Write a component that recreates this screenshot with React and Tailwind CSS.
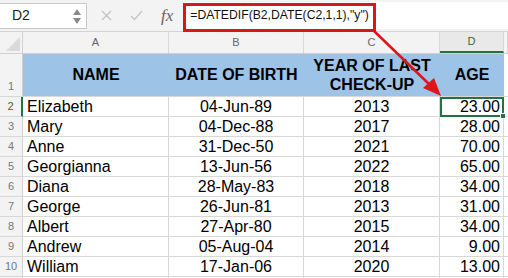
import React from 'react';

const rows = [
  ['Elizabeth', '04-Jun-89', '2013', '23.00'],
  ['Mary', '04-Dec-88', '2017', '28.00'],
  ['Anne', '31-Dec-50', '2021', '70.00'],
  ['Georgianna', '13-Jun-56', '2022', '65.00'],
  ['Diana', '28-May-83', '2018', '34.00'],
  ['George', '26-Jun-81', '2013', '31.00'],
  ['Albert', '27-Apr-80', '2015', '34.00'],
  ['Andrew', '05-Aug-04', '2014', '9.00'],
  ['William', '17-Jan-06', '2020', '13.00'],
];

const cols = 'grid grid-cols-[23px_146px_135px_136px_64px_4px]';

function FormulaBar() {
  return (
    <div className="flex items-center h-[32px] bg-[#f3f3f3] border-b border-[#d4d4d4]">
      <div className="relative w-[88px] h-[26px] bg-white border border-[#c8c8c8] -ml-px flex items-center">
        <span className="ml-[12px] text-[14px] text-[#222]">D2</span>
        <div className="absolute left-[73px] top-[5px] flex flex-col gap-[3px]">
          <svg width="8" height="6" viewBox="0 0 8 6">
            <polygon points="4,0 8,6 0,6" fill="#8a8a8a" />
          </svg>
          <svg width="8" height="6" viewBox="0 0 8 6">
            <polygon points="0,0 8,0 4,6" fill="#8a8a8a" />
          </svg>
        </div>
      </div>
      <div className="flex items-center ml-[14px] gap-[18px]">
        <svg width="11" height="11" viewBox="0 0 11 11">
          <path d="M1 1L10 10M10 1L1 10" stroke="#c4c4c4" strokeWidth="1.4" />
        </svg>
        <svg width="13" height="11" viewBox="0 0 13 11">
          <path d="M1 6L4.5 9.5L12 1" stroke="#c4c4c4" strokeWidth="1.4" fill="none" />
        </svg>
        <span className="font-['Liberation_Serif'] italic text-[17px] text-[#666] leading-none">fx</span>
      </div>
      <div className="ml-[11px] flex-1 h-[27px] bg-white flex items-center">
        <span className="ml-[6px] text-[12.2px] text-[#111]">=DATEDIF(B2,DATE(C2,1,1),"y")</span>
      </div>
    </div>
  );
}

function ColHeader() {
  const letters = ['A', 'B', 'C', 'D', ''];
  return (
    <div className={`${cols} h-[22px] bg-[#f3f3f3] border-b border-[#d0d0d0]`}>
      <div className="relative border-r border-[#d0d0d0]">
        <svg className="absolute right-[2px] bottom-[2px]" width="14" height="14" viewBox="0 0 14 14">
          <polygon points="14,0 14,14 0,14" fill="#d9d9d9" />
        </svg>
      </div>
      {letters.map((l, i) => (
        <div
          key={i}
          className={`flex items-center justify-center text-[11px] border-r border-[#d8d8d8] ${
            l === 'D' ? 'text-[#217346] border-b-2 border-b-[#217346] bg-[#e9e9e9]' : 'text-[#666]'
          }`}
        >
          {l}
        </div>
      ))}
    </div>
  );
}

function RowNum({ n, active, bottom }) {
  return (
    <div
      className={`flex justify-center text-[11px] bg-[#f3f3f3] border-b border-[#d8d8d8] ${
        bottom ? 'items-end pb-[2px]' : 'items-center'
      } ${active ? 'text-[#217346] border-r-2 border-r-[#217346]' : 'text-[#777] border-r border-r-[#d0d0d0]'}`}
    >
      {n}
    </div>
  );
}

export default function App() {
  return (
    <div className="relative w-[508px] h-[278px] overflow-hidden bg-white font-['Liberation_Sans',Arial,sans-serif] text-black">
      <FormulaBar />
      <ColHeader />
      <div className={`${cols} h-[43px]`}>
        <RowNum n="1" bottom />
        <div className="bg-[#9dc3e6] flex items-center justify-center font-bold text-[16px] border-b border-[#d8d8d8]">NAME</div>
        <div className="bg-[#9dc3e6] flex items-center justify-center font-bold text-[16px] border-b border-[#d8d8d8]">DATE OF BIRTH</div>
        <div className="bg-[#9dc3e6] flex flex-col items-center justify-center font-bold text-[16px] leading-[19px] border-b border-[#d8d8d8]">
          <span>YEAR OF LAST</span>
          <span>CHECK-UP</span>
        </div>
        <div className="bg-[#9dc3e6] flex items-center justify-center font-bold text-[16px] border-b border-[#d8d8d8]">AGE</div>
        <div className="border-b border-[#d8d8d8]"></div>
      </div>
      {rows.map((r, i) => (
        <div key={i} className={`${cols} h-[20px] text-[16px] leading-none`}>
          <RowNum n={i + 2} active={i === 0} />
          <div className="flex items-center pl-[4px] border-r border-b border-[#d8d8d8]">{r[0]}</div>
          <div className="flex items-center justify-center border-r border-b border-[#d8d8d8]">{r[1]}</div>
          <div className="flex items-center justify-center border-r border-b border-[#d8d8d8]">{r[2]}</div>
          {i === 0 ? (
            <div className="relative flex items-center justify-end pr-[2px] border-2 border-[#217346]">
              {r[3]}
              <div className="absolute -right-[4px] -bottom-[4px] w-[6px] h-[6px] bg-[#217346] border border-white"></div>
            </div>
          ) : (
            <div className="flex items-center justify-end pr-[3px] border-r border-b border-[#d8d8d8]">{r[3]}</div>
          )}
          <div className="border-b border-[#d8d8d8]"></div>
        </div>
      ))}
      <div className={`${cols} h-[10px]`}>
        <RowNum n="" />
        <div className="border-r border-[#d8d8d8]"></div>
        <div className="border-r border-[#d8d8d8]"></div>
        <div className="border-r border-[#d8d8d8]"></div>
        <div className="border-r border-[#d8d8d8]"></div>
        <div></div>
      </div>
      <div className="absolute left-[183px] top-[3px] w-[193px] h-[29px] border-[3px] border-[#d9161c]"></div>
      <svg className="absolute left-0 top-0 pointer-events-none" width="508" height="278" viewBox="0 0 508 278">
        <line x1="374" y1="31" x2="430" y2="85" stroke="#e0141b" strokeWidth="2.5" />
        <polygon points="441,96 423,88 434,78" fill="#e0141b" />
      </svg>
    </div>
  );
}
